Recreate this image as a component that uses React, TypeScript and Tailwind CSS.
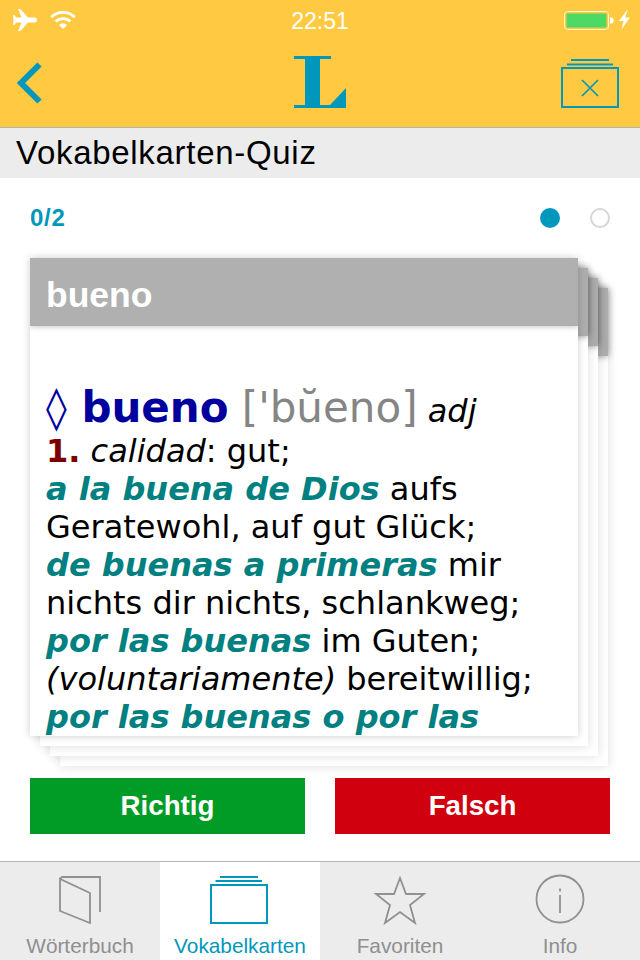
import React from "react";

const sans = "font-['Liberation_Sans',Arial,sans-serif]";

function BackCard({ cls }: { cls: string }) {
  return (
    <div className={`absolute w-[548px] h-[478px] bg-white shadow-[0_0_10px_rgba(0,0,0,0.14)] ${cls}`}>
      <div className="h-[68px] bg-[#adadad] shadow-[0_0_7px_rgba(0,0,0,0.45)]" />
    </div>
  );
}

function StatusBar() {
  return (
    <div className="relative h-[40px] flex items-start justify-between pt-[9px] pl-[12px] pr-[9px] text-white">
      <div className="flex gap-[12px]">
        <svg width="26" height="22" viewBox="12 9 26 22" fill="#fff">
          <path d="M18 9h2.500L28 17.500h7q2 0 2 2.500t-2 2.500h-7L20.500 31H18l3.500-8.500H16L14.500 25H13l.5-5-.5-5h1.500l1.500 2.500h5.500z" />
        </svg>
        <svg width="26" height="22" viewBox="50 9 26 22" fill="none" stroke="#fff" strokeWidth="2.800">
          <path d="M51.300 17.300A16.500 16.500 0 0 1 74.700 17.300" />
          <path d="M55.600 21.600A10.500 10.500 0 0 1 70.400 21.600" />
          <path d="M63 29L59 25A5.700 5.700 0 0 1 67 25z" fill="#fff" stroke="none" />
        </svg>
      </div>
      <div className={`absolute left-0 right-0 top-[7px] text-center text-[23px] leading-[28px] ${sans}`}>22:51</div>
      <div className="flex gap-[3px]">
        <svg width="52" height="22" viewBox="563 9 52 22">
          <rect x="564.500" y="11.500" width="44" height="18" rx="3" fill="none" stroke="#fff6d0" />
          <rect x="566.500" y="13.500" width="40" height="14" rx="1" fill="#4cd964" />
          <path d="M610 17.500h1.500a2 2 0 0 1 2 2v2a2 2 0 0 1-2 2H610z" fill="#fff" />
        </svg>
        <svg width="13" height="22" viewBox="618 9 13 22" fill="#fff">
          <path d="M627 10L619 21h4.500l-2 8.500 8.500-12h-5l2.500-7.500z" />
        </svg>
      </div>
    </div>
  );
}

function NavBar() {
  return (
    <div className="h-[87px] grid grid-cols-3 px-[20px]">
      <svg className="mt-[20px] ml-[-6px] justify-self-start" width="30" height="46" viewBox="14 60 30 46" fill="none" stroke="#0097bd" strokeWidth="6">
        <path d="M39.500 64.500L21 83l18.500 18.500" />
      </svg>
      <svg className="mt-[16px] justify-self-center" width="52" height="52" viewBox="294 56 52 52" fill="#0097bd">
        <path d="M294 56H331V59H320V105H330L346 88V108H294V105H305V59H294z" />
      </svg>
      <svg className="mt-[16px] justify-self-end" width="60" height="54" viewBox="560 56 60 54" fill="none" stroke="#0097bd">
        <path d="M571 60h38M567 64.500h46" strokeWidth="2" />
        <rect x="562" y="68" width="56" height="39" strokeWidth="2" />
        <path d="M582 80l16 16M598 80l-16 16" strokeWidth="1.700" />
      </svg>
    </div>
  );
}

function Tab({ label, active, children }: { label: string; active?: boolean; children: React.ReactNode }) {
  return (
    <div className={`w-[160px] flex flex-col items-center pt-[10px] ${active ? "bg-white text-[#0097bd]" : "text-[#8f8f8f]"}`}>
      <div className="h-[56px] flex items-start justify-center">{children}</div>
      <div className={`text-[20.8px] leading-[24px] mt-[6px] ${sans}`}>{label}</div>
    </div>
  );
}

export default function App() {
  return (
    <div className={`w-[640px] h-[960px] bg-white flex flex-col overflow-hidden ${sans}`}>
      <div className="bg-[#ffca42] h-[128px] border-b border-[#b4b4b4]">
        <StatusBar />
        <NavBar />
      </div>
      <div className="h-[50px] bg-[#ececec] pl-[16px] text-[33px] tracking-[0.7px] leading-[50px] text-black">Vokabelkarten-Quiz</div>

      <div className="h-[80px] flex items-center justify-between pl-[30px] pr-[30px] pb-[1px]">
        <span className="text-[#0097bd] text-[24px] tracking-[0.7px] font-bold">0/2</span>
        <div className="flex items-center gap-[30px]">
          <div className="w-[20px] h-[20px] rounded-full bg-[#0097bd]" />
          <div className="w-[20px] h-[20px] rounded-full border-[2px] border-[#d6d6d6]" />
        </div>
      </div>

      <div className="relative h-[520px] mx-[30px]">
        <BackCard cls="left-[30px] top-[30px]" />
        <BackCard cls="left-[20px] top-[20px]" />
        <BackCard cls="left-[10px] top-[10px]" />
        <div className="absolute left-0 top-0 w-[548px] h-[478px] bg-white shadow-[0_0_8px_rgba(0,0,0,0.2)] overflow-hidden">
          <div className="h-[68px] bg-[#b0b0b0] shadow-[0_0_6px_rgba(0,0,0,0.3)] pl-[16px] text-white font-bold text-[35.5px] leading-[74px]">bueno</div>
          <div className="pl-[16px] pt-[61px] font-['DejaVu_Sans',sans-serif] text-[32px] leading-[38px] text-black whitespace-nowrap">
            <div className="leading-[41px]">
              <span className="text-[#00009c] text-[42px] font-bold"><span className="font-normal">◊</span> bueno</span>{" "}
              <span className="text-[#858585] text-[42px] ml-[3px]">['bŭeno]</span>{" "}
              <i>adj</i>
            </div>
            <div><b className="text-[#7b0000]">1.</b> <i>calidad</i>: gut;</div>
            <div><b className="italic text-[#008080]">a la buena de Dios</b> aufs</div>
            <div>Geratewohl, auf gut Glück;</div>
            <div><b className="italic text-[#008080]">de buenas a primeras</b> mir</div>
            <div>nichts dir nichts, schlankweg;</div>
            <div><b className="italic text-[#008080]">por las buenas</b> im Guten;</div>
            <div><i>(voluntariamente)</i> bereitwillig;</div>
            <div><b className="italic text-[#008080]">por las buenas o por las</b></div>
          </div>
        </div>
      </div>

      <div className="flex justify-between px-[30px]">
        <div className="w-[275px] h-[56px] bg-[#009c26] text-white font-bold text-[27.7px] leading-[56px] text-center">Richtig</div>
        <div className="w-[275px] h-[56px] bg-[#d0000f] text-white font-bold text-[27.7px] leading-[56px] text-center">Falsch</div>
      </div>

      <div className="mt-[27px] h-[99px] flex bg-[#ececec] border-t border-[#b4b4b4]">
        <Tab label="Wörterbuch">
          <svg width="50" height="56" viewBox="55 872 50 56" fill="none" stroke="#909090" strokeWidth="1.800">
            <path d="M60 879V911L90 923V893z" />
            <path d="M60 879L62 877H100V912" />
          </svg>
        </Tab>
        <Tab label="Vokabelkarten" active>
          <svg width="70" height="56" viewBox="205 872 70 56" fill="none" stroke="#0097bd">
            <path d="M220 877h38M215.500 881h46.500" strokeWidth="2" />
            <rect x="211" y="885" width="56" height="38" strokeWidth="2" />
          </svg>
        </Tab>
        <Tab label="Favoriten">
          <svg width="60" height="56" viewBox="369 872 60 56" fill="none" stroke="#909090" strokeWidth="1.800">
            <path d="M399 878L405 894H423L409 905L414 923L399 912L384 923L389 905L375 894H393z" />
          </svg>
        </Tab>
        <Tab label="Info">
          <svg width="60" height="56" viewBox="530 872 60 56" fill="none" stroke="#909090" strokeWidth="1.800">
            <circle cx="560" cy="899" r="23.500" />
            <path d="M560 895V913M560 888.500V891.500" />
          </svg>
        </Tab>
      </div>
    </div>
  );
}
